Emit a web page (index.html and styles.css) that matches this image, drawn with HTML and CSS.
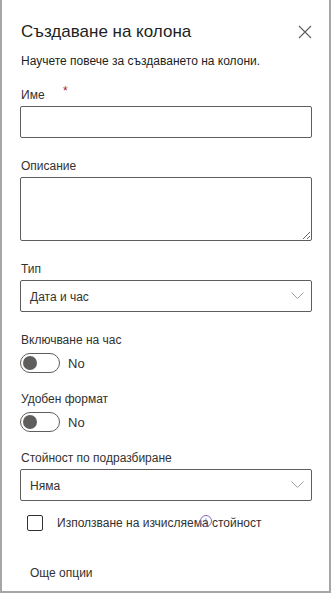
FILE: index.html
```html
<!DOCTYPE html>
<html lang="bg">
<head>
    <meta charset="UTF-8">
    <meta name="viewport" content="width=device-width, initial-scale=1.0">
    <title>Създаване на колона</title>
    <link rel="stylesheet" href="styles.css">
</head>
<body>
    <div class="panel">
        <!-- Заглавие -->
        <div class="header">
            <h1 class="title">Създаване на колона</h1>
            <button class="close" aria-label="Затвори">
                <svg width="14" height="14" viewBox="0 0 14 14">
                    <path d="M1 1 L13 13 M13 1 L1 13" stroke="#605e5c" stroke-width="1.1" fill="none"/>
                </svg>
            </button>
        </div>
        <a class="learn" href="#">Научете повече за създаването на колони.</a>

        <div class="field first">
            <label class="label">Име <span class="req">*</span></label>
            <input class="input" type="text">
        </div>

        <div class="field">
            <label class="label">Описание</label>
            <textarea class="textarea"></textarea>
        </div>

        <div class="field">
            <label class="label">Тип</label>
            <div class="dropdown">
                <span>Дата и час</span>
                <svg class="chevron" width="13" height="7" viewBox="0 0 13 7">
                    <path d="M0.5 0.5 L6.5 6.5 L12.5 0.5" stroke="#a19f9d" stroke-width="1" fill="none"/>
                </svg>
            </div>
        </div>

        <div class="field">
            <label class="label">Включване на час</label>
            <div class="toggle-row">
                <span class="toggle"><span class="thumb"></span></span>
                <span class="toggle-text">No</span>
            </div>
        </div>

        <div class="field tight">
            <label class="label">Удобен формат</label>
            <div class="toggle-row">
                <span class="toggle"><span class="thumb"></span></span>
                <span class="toggle-text">No</span>
            </div>
        </div>

        <div class="field tight">
            <label class="label">Стойност по подразбиране</label>
            <div class="dropdown">
                <span>Няма</span>
                <svg class="chevron" width="13" height="7" viewBox="0 0 13 7">
                    <path d="M0.5 0.5 L6.5 6.5 L12.5 0.5" stroke="#a19f9d" stroke-width="1" fill="none"/>
                </svg>
            </div>
        </div>

        <div class="check-row">
            <span class="checkbox"></span>
            <span class="check-text">Използване на изчисляема стойност</span>
            <span class="info">i</span>
        </div>

        <button class="more">Още опции</button>
    </div>
</body>
</html>
```

FILE: styles.css
```css
body {
    margin: 0;
    font-family: "Liberation Sans", Arial, sans-serif;
    color: #323130;
    background: #fff;
}

.panel {
    box-sizing: border-box;
    width: 331px;
    height: 593px;
    border: 2px solid #a6a6a6;
    border-top: none;
    padding: 20px 17px 0 18px;
    display: flex;
    flex-direction: column;
}

/* Заглавие */
.header {
    display: flex;
    justify-content: space-between;
    align-items: center;
    height: 24px;
}

.title {
    margin: 0 0 0 1px;
    font-size: 17px;
    font-weight: normal;
    line-height: 24px;
    color: #201f1e;
}

.close {
    border: none;
    background: none;
    padding: 0;
    width: 14px;
    height: 14px;
    display: flex;
}

.learn {
    margin: 7px 0 0 1px;
    font-size: 12px;
    line-height: 20px;
    color: #201f1e;
    text-decoration: none;
}

.field {
    display: flex;
    flex-direction: column;
    margin-top: 18px;
}

.field.first {
    margin-top: 14px;
}

.field.tight {
    margin-top: 16px;
}

.label {
    font-size: 12px;
    line-height: 20px;
    margin: 0 0 1px 1px;
    color: #323130;
}

.req {
    color: #a4262c;
    margin-left: 15px;
    font-size: 12px;
    position: relative;
    top: -4px;
}

.input {
    box-sizing: border-box;
    height: 32px;
    border: 1px solid #605e5c;
    border-radius: 2px;
    margin: 0;
}

.textarea {
    box-sizing: border-box;
    height: 64px;
    border: 1px solid #605e5c;
    border-radius: 2px;
    margin: 0;
    resize: vertical;
}

.dropdown {
    box-sizing: border-box;
    height: 32px;
    border: 1px solid #605e5c;
    border-radius: 2px;
    padding: 0 7px 0 9px;
    display: flex;
    align-items: center;
    justify-content: space-between;
    font-size: 12px;
    color: #323130;
}

.dropdown span {
    padding-top: 2px;
}

.chevron {
    margin-top: -2px;
}

.toggle-row {
    display: flex;
    align-items: center;
    gap: 8px;
    margin-top: 2px;
}

.toggle {
    box-sizing: border-box;
    width: 40px;
    height: 20px;
    border: 1px solid #605e5c;
    border-radius: 10px;
    display: flex;
    align-items: center;
    padding-left: 2px;
}

.thumb {
    width: 14px;
    height: 14px;
    border-radius: 50%;
    background: #605e5c;
}

.toggle-text {
    font-size: 13px;
    color: #323130;
}

.check-row {
    display: flex;
    align-items: center;
    margin-top: 12px;
    padding-left: 7px;
    height: 20px;
    position: relative;
}

.checkbox {
    box-sizing: border-box;
    width: 16px;
    height: 16px;
    border: 1px solid #323130;
    border-radius: 2px;
}

.check-text {
    margin-left: 14px;
    font-size: 12px;
}

/* Иконка над текста */
.info {
    position: absolute;
    left: 180px;
    top: 2px;
    box-sizing: border-box;
    width: 12px;
    height: 12px;
    border: 1px solid #8764b8;
    border-radius: 50%;
    color: #8764b8;
    font-size: 8px;
    line-height: 10px;
    text-align: center;
}

.more {
    align-self: flex-start;
    margin-top: 30px;
    border: none;
    background: none;
    padding: 0 0 0 10px;
    font-family: inherit;
    font-size: 12px;
    line-height: 20px;
    color: #323130;
}
```
